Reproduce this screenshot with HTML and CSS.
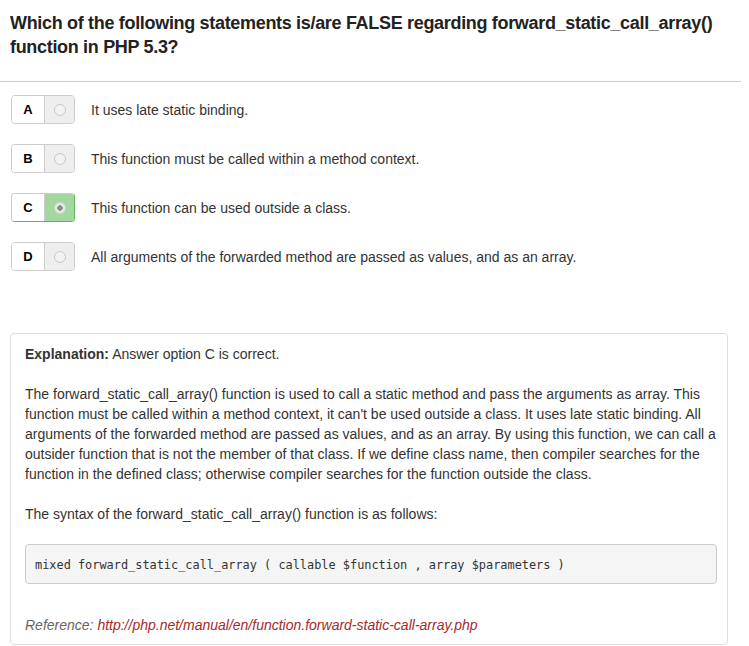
FILE: index.html
```html
<!DOCTYPE html>
<html>
<head>
<meta charset="utf-8">
<link rel="stylesheet" href="styles.css">
</head>
<body>
<div class="page">
  <h1 class="question">Which of the following statements is/are <b>FALSE</b> regarding forward_static_call_array() function in PHP 5.3?</h1>
  <hr class="rule">
  <div class="options">
    <div class="option">
      <div class="choice"><span class="letter">A</span><span class="radio-cell"><span class="radio"></span></span></div>
      <span class="option-text">It uses late static binding.</span>
    </div>
    <div class="option">
      <div class="choice"><span class="letter">B</span><span class="radio-cell"><span class="radio"></span></span></div>
      <span class="option-text">This function must be called within a method context.</span>
    </div>
    <div class="option">
      <div class="choice"><span class="letter">C</span><span class="radio-cell checked"><span class="radio on"></span></span></div>
      <span class="option-text">This function can be used outside a class.</span>
    </div>
    <div class="option">
      <div class="choice"><span class="letter">D</span><span class="radio-cell"><span class="radio"></span></span></div>
      <span class="option-text">All arguments of the forwarded method are passed as values, and as an array.</span>
    </div>
  </div>
  <div class="explanation">
    <p><b>Explanation:</b> Answer option C is correct.</p>
    <p>The forward_static_call_array() function is used to call a static method and pass the arguments as array. This function must be called within a method context, it can't be used outside a class. It uses late static binding. All arguments of the forwarded method are passed as values, and as an array. By using this function, we can call a outsider function that is not the member of that class. If we define class name, then compiler searches for the function in the defined class; otherwise compiler searches for the function outside the class.</p>
    <p>The syntax of the forward_static_call_array() function is as follows:</p>
    <pre class="code">mixed forward_static_call_array ( callable $function , array $parameters )</pre>
    <p class="reference">Reference: <a href="#">http://php.net/manual/en/function.forward-static-call-array.php</a></p>
  </div>
</div>
</body>
</html>
```

FILE: styles.css
```css
html, body {
  margin: 0;
  padding: 0;
  background: #fff;
}
body {
  font-family: "Liberation Sans", Arial, sans-serif;
  color: #333;
}
.page {
  width: 741px;
}
.question {
  margin: 0;
  padding: 11px 0 0 10px;
  font-size: 18px;
  line-height: 24px;
  font-weight: bold;
  letter-spacing: -0.32px;
  color: #222;
}
.rule {
  margin: 22px 0 0 0;
  border: 0;
  border-top: 1px solid #ccc;
  height: 0;
}
.options {
  display: flex;
  flex-direction: column;
  gap: 20px;
  padding: 13px 0 0 11px;
}
.option {
  display: flex;
  align-items: center;
  gap: 16px;
}
.choice {
  display: flex;
  height: 29px;
  box-sizing: border-box;
  border: 1px solid #ccc;
  border-radius: 4px;
  overflow: hidden;
}
.letter {
  width: 32px;
  display: flex;
  align-items: center;
  justify-content: center;
  font-weight: bold;
  font-size: 13px;
  color: #000;
  background: #fff;
  border-right: 1px solid #ccc;
}
.radio-cell {
  width: 29px;
  display: flex;
  align-items: center;
  justify-content: center;
  background: #eee;
}
.radio-cell.checked {
  background: #a3d7a0;
}
.choice:has(.checked) {
  border-color: #ccc #5cb85c #5cb85c #ccc;
}
.radio {
  width: 12px;
  height: 12px;
  box-sizing: border-box;
  border-radius: 50%;
  border: 1px solid #c8c8c8;
  background: #f2f2f2;
}
.radio.on {
  border-color: #c8d8c6;
  background: radial-gradient(circle, #8a8a8a 0 2.5px, #e4ece3 3px);
}
.option-text {
  font-size: 14px;
  color: #333;
}
.explanation {
  margin: 62px 0 0 10px;
  width: 718px;
  box-sizing: border-box;
  border: 1px solid #ddd;
  border-radius: 4px;
  padding: 10px 10px 9px 14px;
  font-size: 14px;
  line-height: 20px;
}
.explanation p {
  margin: 0 0 20px 0;
}
.explanation p.reference {
  margin: 0;
  font-style: italic;
  color: #666;
}
.reference a {
  color: #a52a2a;
  text-decoration: none;
}
.code {
  margin: 0 0 31px 0;
  padding: 11px 9px 9px 9px;
  background: #f5f5f5;
  border: 1px solid #ccc;
  border-radius: 4px;
  font-family: "DejaVu Sans Mono", "Liberation Mono", monospace;
  font-size: 11.9px;
  line-height: 18px;
  color: #333;
}
```
